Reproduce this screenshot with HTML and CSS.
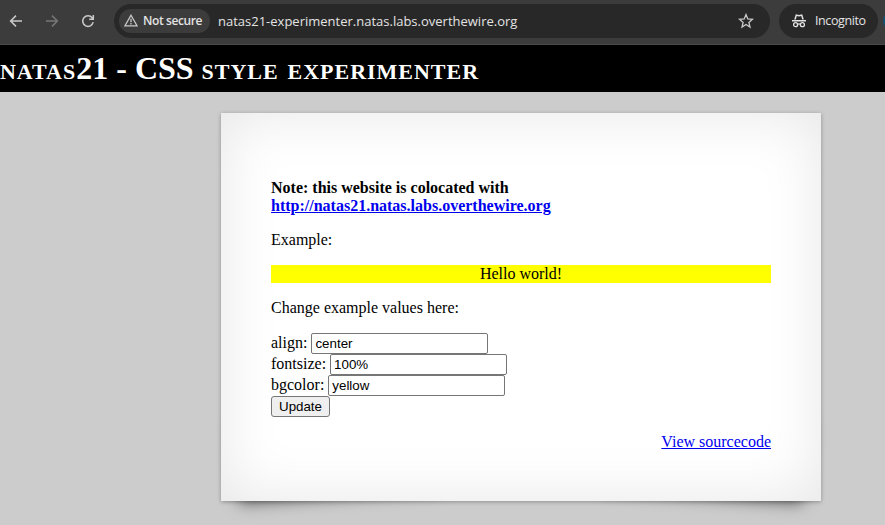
FILE: index.html
```html
<!DOCTYPE html>
<html lang="en">
<head>
<meta charset="utf-8">
<title>natas21 - CSS style experimenter</title>
<link rel="stylesheet" href="styles.css">
</head>
<body>
<header class="toolbar">
  <nav class="nav">
    <svg class="icon" viewBox="0 0 16 16"><path d="M14 8H3M8 2.6 2.6 8 8 13.4"/></svg>
    <svg class="icon dim" viewBox="0 0 16 16"><path d="M2 8h11M8 2.6 13.4 8 8 13.4"/></svg>
    <svg class="icon" viewBox="0 0 16 16"><path d="M13.2 9.2A5.3 5.3 0 1 1 12.2 4.8L13.3 6M13.3 2v4.2H9.2"/></svg>
  </nav>
  <div class="address">
    <span class="security">
      <svg class="warn" viewBox="0 0 14 13"><path d="M7 1.2 13 11.8H1Z"/><path d="M7 4.8v3.5M7 9.1v1.5"/></svg>
      <span class="security-text">Not secure</span>
    </span>
    <span class="url">natas21-experimenter.natas.labs.overthewire.org</span>
    <svg class="star" viewBox="0 0 16 16"><path d="m8 1.6 1.8 4.3 4.7.4-3.6 3.1 1.1 4.6L8 11.5 4 14l1.1-4.6-3.6-3.1 4.7-.4Z"/></svg>
  </div>
  <div class="incognito">
    <svg class="spy" viewBox="0 0 16 16"><path class="solid" d="M1 7.1h14v1.4H1ZM3.2 6.5 4.8 1.3 8 2l3.2-.7 1.6 5.2h-1.6L10.2 3 8 3.4 5.8 3l-1 3.5Z"/><circle cx="4.6" cy="11.7" r="2"/><circle cx="11.4" cy="11.7" r="2"/><path d="M6.6 11.3q1.4-.8 2.8 0"/></svg>
    <span class="incognito-text">Incognito</span>
  </div>
  <span class="avatar"></span>
</header>
<h1><span class="caps">natas</span>21 - CSS <span class="caps">style experimenter</span></h1>
<div class="page">
  <main class="content">
    <p><b>Note: this website is colocated with <a href="#">http://natas21.natas.labs.overthewire.org</a></b></p>
    <p>Example:</p>
    <div class="example">Hello world!</div>
    <p>Change example values here:</p>
    <form>
      <div class="field">align: <input value="center"></div>
      <div class="field">fontsize: <input value="100%"></div>
      <div class="field">bgcolor: <input value="yellow"></div>
      <button type="button">Update</button>
    </form>
    <div class="source"><a href="#">View sourcecode</a></div>
  </main>
</div>
</body>
</html>
```
FILE: styles.css
```css
* { box-sizing: border-box; }
html { height: 525px; overflow: hidden; background: #ccc; }
body { margin: 0; height: 525px; overflow: hidden; font: 16px/18px "Liberation Serif", serif; color: #000; }
a { color: #00e; }

.toolbar { display: flex; align-items: center; height: 45px; padding: 0 0 3px; background: #3c3c3c; border-bottom: 1px solid #4a4a4a; font-family: "Open Sans", sans-serif; font-size: 13px; overflow: hidden; }
.nav { display: flex; gap: 20px; width: 114px; padding-left: 8px; flex: none; }
svg { fill: none; stroke: #c9c9c9; stroke-width: 1.5; flex: none; }
.icon { width: 16px; height: 16px; }
.dim { stroke: #777; }
.address { display: flex; align-items: center; width: 656px; height: 34px; padding: 0 16px 0 5px; border-radius: 17px; background: #282828; flex: none; }
.security { display: flex; align-items: center; gap: 5px; width: 91px; height: 24px; padding-left: 5px; border-radius: 12px; background: #3c3c3c; }
.warn { width: 14px; height: 13px; stroke-width: 1.3; }
.security-text { color: #e3e3e3; font-size: 12px; font-weight: 600; letter-spacing: -.4px; white-space: nowrap; }
.url { margin-left: 8px; color: #e3e3e3; white-space: nowrap; }
.star { width: 16px; height: 16px; margin-left: auto; stroke-width: 1.3; }
.incognito { display: flex; align-items: center; gap: 8px; width: 99px; height: 34px; margin-left: 9px; padding-left: 12px; border-radius: 17px; background: #282828; flex: none; }
.spy { width: 16px; height: 16px; stroke: #e3e3e3; stroke-width: 1.3; }
.solid { fill: #e3e3e3; stroke: none; }
.incognito-text { color: #e3e3e3; font-size: 12.5px; letter-spacing: -.4px; }
.avatar { width: 20px; height: 20px; margin-left: 5px; border-radius: 50%; background: #14506f; flex: none; }

h1 { margin: 0; height: 47px; padding-top: 5px; background: #000; color: #fff; font-size: 32px; line-height: 37px; font-variant: small-caps; white-space: nowrap; }
.caps { letter-spacing: .98px; }

.page { position: relative; z-index: 0; padding: 21px 0 0 221px; }
.content { display: flow-root; position: relative; width: 600px; height: 388px; padding: 50px; background: #fff; box-shadow: 0 1px 4px rgba(0, 0, 0, .3), inset 0 0 60px rgba(0, 0, 0, .1); }
.content::before, .content::after { content: ""; position: absolute; z-index: -2; bottom: 13px; left: 15px; width: 200px; height: 80px; box-shadow: 0 8px 16px rgba(0, 0, 0, .6); transform: rotate(-4deg); }
.content::after { left: auto; right: 15px; transform: rotate(4deg); }
.content > p { margin: 16px 0; }
.example { background: #ff0; text-align: center; }
.field { height: 21px; line-height: 18px; display: flex; align-items: baseline; gap: 4px; }
input { width: 177px; height: 21px; margin: 0; padding: 1px 3px; border: 1px solid #767676; border-radius: 2px; font: 13.333px "Liberation Sans", sans-serif; }
button { display: block; width: 59px; height: 21px; padding: 0; border: 1px solid #767676; border-radius: 3px; background: #efefef; font: 13.333px "Liberation Sans", sans-serif; color: #000; }
.source { margin-top: 16px; text-align: right; }
```
